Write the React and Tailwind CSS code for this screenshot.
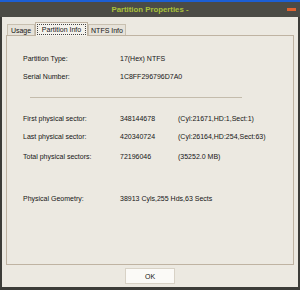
import React from 'react';

const rows = [
  { label: 'First physical sector:', value: '348144678', extra: '(Cyl:21671,HD:1,Sect:1)', top: 'mt-[17px]' },
  { label: 'Last physical sector:', value: '420340724', extra: '(Cyl:26164,HD:254,Sect:63)', top: 'mt-[10px]' },
  { label: 'Total physical sectors:', value: '72196046', extra: '(35252.0 MB)', top: 'mt-[12px]' },
];

const App = () => {
  return (
    <div className="w-[300px] h-[290px] flex flex-col bg-[#3c3c38] font-['Liberation_Sans',sans-serif] text-[7px] leading-[8px] text-[#151515]">
      {/* Title bar */}
      <div className="h-[2px] bg-[#1c5fd4]" />
      <div className="h-[15px] relative flex items-center justify-center bg-[#4b4b45]">
        <span className="font-bold text-[#a9c23a] text-[7.8px] leading-none">Partition Properties -</span>
        <div className="absolute right-[4px] top-[6px] w-[9px] h-[3px] bg-[#e0622e]" />
      </div>

      {/* Body */}
      <div className="flex-1 mx-[2px] mb-[3px] bg-[#ece9e1] flex flex-col px-[4px]">
        {/* Tabs */}
        <div className="flex items-end h-[18px] pl-[1px]">
          <div className="h-[11px] w-[28px] border border-b-0 border-[#c8c0b0] bg-[#e6e2d9] flex items-center justify-center leading-none">Usage</div>
          <div className="h-[14px] w-[53px] p-px border border-b-0 border-[#bfb3a2] bg-[#f4f2ec] -mb-px relative z-10">
            <div className="h-full border border-dotted border-[#444] flex items-center justify-center leading-none">Partition Info</div>
          </div>
          <div className="h-[11px] w-[38px] border border-b-0 border-[#c8c0b0] bg-[#e6e2d9] flex items-center justify-center leading-none">NTFS Info</div>
        </div>
        <div className="h-[230px] border border-[#bfb3a2] flex flex-col pl-[16px]">
          <div className="flex mt-[19px]">
            <span className="w-[97px]">Partition Type:</span>
            <span>17(Hex) NTFS</span>
          </div>
          <div className="flex mt-[10px]">
            <span className="w-[97px]">Serial Number:</span>
            <span>1C8FF296796D7A0</span>
          </div>
          <div className="ml-[7px] w-[212px] h-px bg-[#c4bcac] mt-[16px]" />
          {rows.map((r) => (
            <div key={r.label} className={`flex ${r.top}`}>
              <span className="w-[97px]">{r.label}</span>
              <span className="w-[58px]">{r.value}</span>
              <span>{r.extra}</span>
            </div>
          ))}
          <div className="flex mt-[34px]">
            <span className="w-[97px]">Physical Geometry:</span>
            <span>38913 Cyls,255 Hds,63 Sects</span>
          </div>
        </div>
        <div className="flex justify-center mt-[3px]">
          <button className="w-[50px] h-[16px] border border-[#d8d2c6] bg-[#fbfaf7] leading-none text-[7px]">OK</button>
        </div>
      </div>
    </div>
  );
};

export default App;
